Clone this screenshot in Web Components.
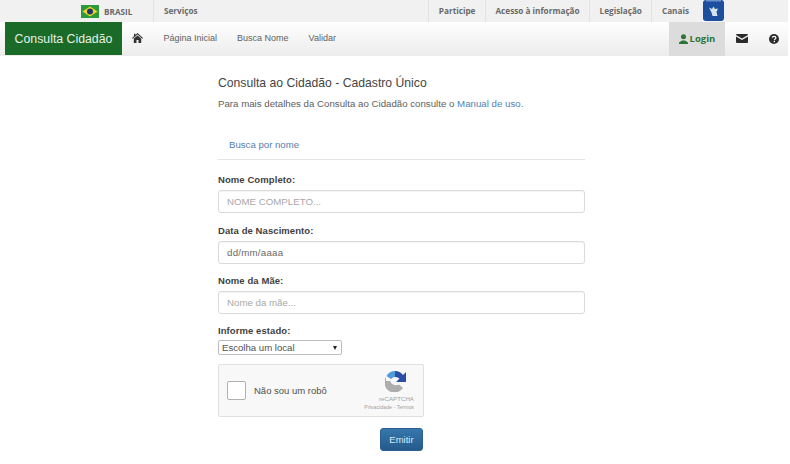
<!DOCTYPE html>
<html lang="pt-BR">
<head>
<meta charset="utf-8">
<title>Consulta Cidadão</title>
<style>
  html, body { margin: 0; background: #fff; }
  body { font-family: "Liberation Sans", Arial, sans-serif; color: #333; width: 788px; height: 464px; overflow: hidden; }
</style>
</head>
<body>
<gov-bar></gov-bar>
<app-nav></app-nav>
<consulta-page>
  <form-field label="Nome Completo:" placeholder="NOME COMPLETO..."></form-field>
  <form-field label="Data de Nascimento:" placeholder="dd/mm/aaaa" dark></form-field>
  <form-field label="Nome da Mãe:" placeholder="Nome da mãe..."></form-field>
  <state-select></state-select>
  <captcha-box></captcha-box>
</consulta-page>

<script>
class GovBar extends HTMLElement {
    constructor() {
        super();
        this.shadow = this.attachShadow({ mode: 'open' });
    }
    connectedCallback() {
        this.shadow.innerHTML = `
        <style>
            :host { display: flex; height: 22px; background: #f1f1f1; align-items: stretch;
                    font: bold 8.2px "Open Sans", sans-serif; color: #6a6a6a; }
            .brasil { display: flex; align-items: center; gap: 5px; padding-left: 81px; width: 72px; border-right: 1px solid #e2e2e2; }
            .brasil svg { display: block; }
            .item { display: flex; align-items: center; padding: 0 9.500px 2px; border-left: 1px solid #e2e2e2; }
            .servicos { padding: 0 0 2px 10px; display: flex; align-items: center; flex: 1; }
            .item.end { padding-right: 14px; }
            .access { width: 21px; height: 21px; margin: 0 64px 0 0; align-self: flex-start; }
        </style>
        <div class="brasil">
            <svg width="18" height="13" viewBox="0 0 18 13">
                <rect width="18" height="13" fill="#2c9a3c"/>
                <path d="M9 1.500 16.500 6.500 9 11.500 1.500 6.500z" fill="#f0d424"/>
                <circle cx="9" cy="6.500" r="3" fill="#23356f"/>
            </svg>
            <span>BRASIL</span>
        </div>
        <div class="servicos">Serviços</div>
        <div class="item">Participe</div>
        <div class="item">Acesso à informação</div>
        <div class="item">Legislação</div>
        <div class="item end">Canais</div>
        <svg class="access" viewBox="0 0 21 21">
            <rect x="0" y="0" width="21" height="21" rx="3" fill="#1d4f9e"/>
            <rect x="3" y="0" width="15" height="1.500" fill="#6f93c9"/>
            <path d="M6 7.500 9 9 10.500 6.500 12 9 15 8.500 13.500 12 14.500 16H9.500L8.500 12.500z" fill="#d5e2f0"/>
        </svg>`;
    }
}
customElements.define('gov-bar', GovBar);

class AppNav extends HTMLElement {
    constructor() {
        super();
        this.shadow = this.attachShadow({ mode: 'open' });
    }
    connectedCallback() {
        this.shadow.innerHTML = `
        <style>
            :host { display: flex; height: 34px; padding-left: 5px; align-items: stretch;
                    background: linear-gradient(#ffffff, #ececec); font-size: 9px; color: #626262; }
            .brand { width: 117px; height: 33px; background: #1a6b27; color: #e6f0e6; font-size: 12.300px;
                     display: flex; align-items: center; justify-content: center; box-sizing: border-box; padding-top: 1px; }
            .links { display: flex; align-items: center; flex: 1; padding-bottom: 2px; }
            .home { margin: 0 20.500px 0 10px; display: block; }
            .links span { margin-right: 20px; }
            .login { width: 56px; background: #dcdcdc; display: flex; align-items: center; justify-content: center; gap: 2px;
                     color: #2a7435; font: bold 9.500px "Open Sans", sans-serif; padding-bottom: 1px; box-sizing: border-box; }
            .icons { display: flex; align-items: center; width: 63px; padding-bottom: 1px; }
            .icons svg { display: block; }
            .mail { margin-left: 11px; }
            .help { margin-left: 21px; }
        </style>
        <div class="brand">Consulta Cidadão</div>
        <div class="links">
            <svg class="home" width="11" height="10" viewBox="0 0 11 10">
                <path d="M5.500 0 11 5 10.300 5.800 5.500 1.600 .7 5.800 0 5 2 3.200V.8H3.400V1.900z" fill="#333"/>
                <path d="M1.800 5.500 5.500 2.400 9.200 5.500V10H6.500V7H4.500V10H1.800z" fill="#333"/>
            </svg>
            <span>Página Inicial</span>
            <span>Busca Nome</span>
            <span>Validar</span>
        </div>
        <div class="login">
            <svg width="9" height="10" viewBox="0 0 9 10">
                <circle cx="4.500" cy="2.800" r="2.500" fill="#2a7435"/>
                <path d="M0 10V8.500L3 6.500H6L9 8.500V10z" fill="#2a7435"/>
            </svg>
            <span>Login</span>
        </div>
        <div class="icons">
            <svg class="mail" width="12" height="9" viewBox="0 0 11 9" preserveAspectRatio="none">
                <path d="M1 0H10a1 1 0 0 1 1 1L5.500 4.500 0 1A1 1 0 0 1 1 0z" fill="#2b2b2b"/>
                <path d="M0 2.400 5.500 5.900 11 2.400V8a1 1 0 0 1-1 1H1A1 1 0 0 1 0 8z" fill="#2b2b2b"/>
            </svg>
            <svg class="help" width="10" height="10" viewBox="0 0 10 10">
                <circle cx="5" cy="5" r="5" fill="#2b2b2b"/>
                <path d="M3.200 3.800C3.300 2.800 4 2.300 5 2.300s1.900.6 1.900 1.500c0 1.400-1.500 1.200-1.500 2.400" fill="none" stroke="#fff" stroke-width="1.200"/>
                <rect x="4.700" y="6.900" width="1.300" height="1.300" fill="#fff"/>
            </svg>
        </div>`;
    }
}
customElements.define('app-nav', AppNav);

class ConsultaPage extends HTMLElement {
    constructor() {
        super();
        this.shadow = this.attachShadow({ mode: 'open' });
    }
    connectedCallback() {
        this.shadow.innerHTML = `
        <style>
            :host { display: block; width: 367px; margin-left: 218px; font-size: 10px; color: #444; }
            h1 { font-size: 12.200px; font-weight: normal; margin: 0; padding-top: 20px; line-height: 15px; color: #444; }
            p { margin: 6px 0 0; font-size: 9.700px; line-height: 13px; color: #5e5e5e; }
            a { color: #5580b0; text-decoration: none; }
            .tabs { margin-top: 23px; height: 27px; padding-left: 11px; box-sizing: border-box; line-height: 23px;
                    border-bottom: 1px solid #e4e4e4; font-size: 9.650px; }
            .fields { margin-top: 13px; }
            .submit { display: flex; justify-content: flex-end; width: 205px; margin-top: 11px; }
            button { width: 43px; height: 23px; border: 1px solid #2a5f8f; border-radius: 3px; padding: 0;
                     background: linear-gradient(#3677ac, #245b8c); color: #dfe9f2; font: 9.500px "Liberation Sans", sans-serif; }
        </style>
        <h1>Consulta ao Cidadão - Cadastro Único</h1>
        <p>Para mais detalhes da Consulta ao Cidadão consulte o <a>Manual de uso.</a></p>
        <div class="tabs"><a>Busca por nome</a></div>
        <div class="fields"><slot></slot></div>
        <div class="submit"><button type="button">Emitir</button></div>`;
    }
}
customElements.define('consulta-page', ConsultaPage);

class FormField extends HTMLElement {
    constructor() {
        super();
        this.shadow = this.attachShadow({ mode: 'open' });
    }
    connectedCallback() {
        const label = this.getAttribute('label');
        const placeholder = this.getAttribute('placeholder');
        const dark = this.hasAttribute('dark');
        this.shadow.innerHTML = `
        <style>
            :host { display: block; height: 50.500px; }
            label { display: block; font: bold 9.500px/14px "Liberation Sans", sans-serif; letter-spacing: .08px; color: #3f3f3f; margin-bottom: 3px; }
            input { display: block; width: 100%; height: 23px; box-sizing: border-box; padding: 0 8px; outline: 0;
                    border: 1px solid #dadada; border-radius: 3px; background: #fff;
                    font: 9.700px "Liberation Sans", sans-serif; letter-spacing: ${dark ? '.25px' : '0'}; box-shadow: inset 0 1px 1px #0000000c; }
            input::placeholder { color: ${dark ? '#6a6a6a' : '#a8a8a8'}; opacity: 1; }
        </style>
        <label>${label}</label>
        <input type="text" placeholder="${placeholder}">`;
    }
}
customElements.define('form-field', FormField);

class StateSelect extends HTMLElement {
    constructor() {
        super();
        this.shadow = this.attachShadow({ mode: 'open' });
    }
    connectedCallback() {
        this.shadow.innerHTML = `
        <style>
            :host { display: block; height: 36px; margin-top: -0.500px; }
            label { display: block; font: bold 9.500px/14px "Liberation Sans", sans-serif; letter-spacing: .08px; color: #3f3f3f; margin-bottom: 2px; }
            .box { width: 124px; height: 15px; box-sizing: border-box; border: 1px solid #bdbdbd; border-radius: 2px; background: #fff;
                   display: flex; justify-content: space-between; align-items: center; padding: 0 4px 0 3px;
                   font-size: 9.600px; color: #505050; }
            .arrow { width: 0; height: 0; border: 2.500px solid transparent; border-top: 4px solid #222; border-bottom: 0; }
        </style>
        <label>Informe estado:</label>
        <div class="box"><span>Escolha um local</span><span class="arrow"></span></div>`;
    }
}
customElements.define('state-select', StateSelect);

class CaptchaBox extends HTMLElement {
    constructor() {
        super();
        this.shadow = this.attachShadow({ mode: 'open' });
    }
    connectedCallback() {
        this.shadow.innerHTML = `
        <style>
            :host { display: flex; align-items: center; width: 206px; height: 53px; margin-top: 4px; box-sizing: border-box;
                    background: #f8f8f8; border: 1px solid #e0e0e0; border-radius: 2px; padding: 0 9px 0 8px; }
            .check { width: 19px; height: 19px; box-sizing: border-box; background: #fff; border: 1px solid #b0b0b0; border-radius: 2px; }
            .text { margin-left: 8px; font-size: 9.500px; color: #505050; flex: 1; }
            .logo { display: flex; flex-direction: column; align-items: flex-end; font-size: 6.200px; color: #a0a0a0; line-height: 9px; padding-top: 2px; }
            .logo svg { display: block; margin: 0 7px 2px 0; }
            .small { font-size: 5.300px; }
        </style>
        <span class="check"></span>
        <span class="text">Não sou um robô</span>
        <div class="logo">
            <svg width="22" height="21" viewBox="0 0 22 21">
                <path d="M10 0A10 10 0 0 1 18 4L21 1V11H11L14.500 7.500A6 6 0 0 0 10 6z" fill="#2a4fa6"/>
                <path d="M10 0A10 10 0 0 0 1.500 5L6 8A6 6 0 0 1 10 6z" fill="#4f9cd8"/>
                <path d="M1 6A10 10 0 0 0 18 17L14 13.500A6 6 0 0 1 5 8.500L5 10H1z" fill="#adadad"/>
            </svg>
            <span>reCAPTCHA</span>
            <span class="small">Privacidade - Termos</span>
        </div>`;
    }
}
customElements.define('captcha-box', CaptchaBox);
</script>
</body>
</html>
